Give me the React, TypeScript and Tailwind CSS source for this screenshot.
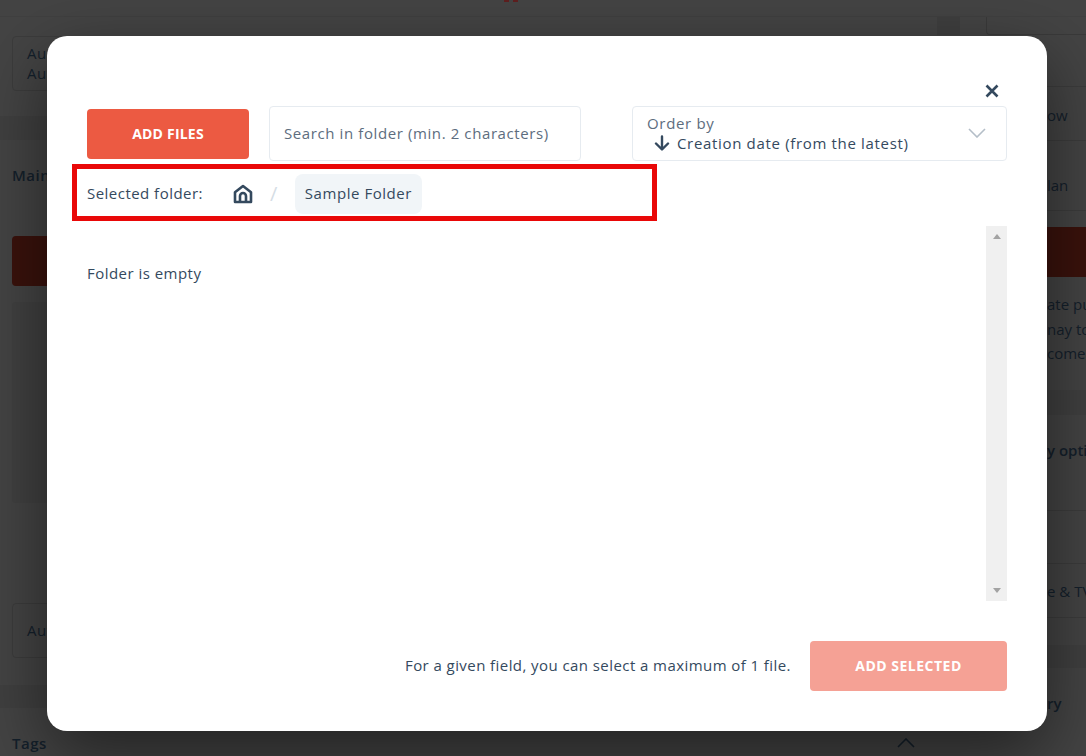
const FONT = "font-['Open_Sans',sans-serif]";

function Home() {
  return (
    <svg width="20" height="20" viewBox="0 0 20 20" fill="none" stroke="#34495e" strokeWidth="2.6" strokeLinejoin="round">
      <path d="M2 8.2 10 2l8 6.2V18H2z" />
      <path d="M7 18v-6a3 3 0 0 1 6 0V18" />
    </svg>
  );
}

function Arrow() {
  return (
    <svg width="16" height="16" viewBox="0 0 16 16" fill="none" stroke="#34495e" strokeWidth="2.4" strokeLinecap="round" strokeLinejoin="round">
      <path d="M8 1.5V14M2 8.5 8 14.5l6-6" />
    </svg>
  );
}

function Background() {
  return (
    <div className="flex h-[756px] w-[1086px] flex-col overflow-hidden bg-[#444] text-[15px] tracking-[0.5px] text-[#14202b]">
      <div className="h-[17px] border-b border-[#404040]">
        <div className="ml-[504px] flex w-[14px] justify-between">
          <div className="h-[2px] w-[5px] bg-[#5e1f1f]" />
          <div className="h-[2px] w-[5px] bg-[#5e1f1f]" />
        </div>
      </div>
      <div className="flex h-[18px]">
        <div className="ml-[937px] w-[23px] bg-[#3f3f3f]" />
        <div className="ml-[26px] flex-1 rounded-bl border-b border-l border-[#3a3a3a]" />
      </div>
      <div className="flex flex-1">
        <div className="flex w-[1047px] shrink-0 flex-col">
          <div className="h-[81px] px-3 pt-[1px]">
            <div className="h-[55px] w-[300px] rounded border border-[#3c3c3c] px-[14px] py-[6px] leading-[20px]">
              <div>Auto</div>
              <div>Auto</div>
            </div>
          </div>
          <div className="h-[24px] bg-[#404040]" />
          <div className="h-[96px] px-3 pt-[24px] font-semibold">Main</div>
          <div className="mx-3 h-[50px] w-[300px] rounded bg-[#3a120c]" />
          <div className="mx-3 mt-[16px] h-[201px] w-[300px] rounded bg-[#414141]" />
          <div className="h-[100px]" />
          <div className="mx-3 h-[55px] w-[300px] rounded border border-[#3c3c3c] px-[14px] py-[16px] leading-[20px]">Auto</div>
          <div className="h-[27px]" />
          <div className="h-[23px] bg-[#404040]" />
          <div className="flex items-center justify-between pt-[24px] pl-3 pr-[132px] font-semibold">
            <span>Tags</span>
            <svg width="18" height="10" viewBox="0 0 18 10" fill="none" stroke="#14202b" strokeWidth="1.6">
              <path d="M1 9 9 1l8 8" />
            </svg>
          </div>
        </div>
        <div className="flex min-w-0 flex-1 flex-col whitespace-nowrap tracking-normal">
          <div className="h-[52px] border-b border-[#3c3c3c]" />
          <div className="h-[54px] border-b border-[#3c3c3c] pt-[17px]">ow</div>
          <div className="h-[16px]" />
          <div className="h-[54px] border-b border-[#3c3c3c] pt-[17px]">lan</div>
          <div className="h-[16px]" />
          <div className="h-[50px] bg-[#3a120c]" />
          <div className="h-[25px] pt-[15px] leading-[24.5px]">
            <div>ate pu</div>
            <div>nay to</div>
            <div>come</div>
          </div>
          <div className="h-[88px]" />
          <div className="h-[25px] bg-[#404040]" />
          <div className="h-[95px] pt-[24px] font-semibold">y optio</div>
          <div className="h-[54px] border-y border-[#3c3c3c]" />
          <div className="h-[54px] border-b border-[#3c3c3c] pt-[16px]">e &amp; TV</div>
          <div className="h-[27px]" />
          <div className="h-[23px] bg-[#404040]" />
          <div className="pt-[24px] font-semibold">ry</div>
        </div>
      </div>
    </div>
  );
}

export default function App() {
  return (
    <div className={`relative h-[756px] w-[1086px] overflow-hidden ${FONT}`}>
      <Background />
      <div className="absolute left-[47px] top-[36px] flex h-[695px] w-[1000px] flex-col rounded-[20px] bg-white px-[40px] text-[#34495e] shadow-[0_24px_70px_rgba(0,0,0,0.5)]">
        <div className="flex h-[70px] items-end justify-end pb-[8px] pr-[8px]">
          <svg width="14" height="14" viewBox="0 0 14 14" fill="none" stroke="#34495e" strokeWidth="2.6">
            <path d="M1.5 1.5l11 11M12.5 1.5l-11 11" />
          </svg>
        </div>
        <div className="flex items-center">
          <button className="h-[50px] w-[162px] rounded bg-[#ec5a42] text-[14px] font-bold tracking-[0.2px] text-white">ADD FILES</button>
          <div className="ml-5 flex h-[55px] w-[312px] items-center rounded border border-[#e6ebf0] px-[14px] text-[15px] tracking-[0.6px] text-[#5d6d7e]">
            Search in folder (min. 2 characters)
          </div>
          <div className="ml-[51px] flex h-[55px] w-[375px] items-center justify-between rounded border border-[#e6ebf0] pb-[2px] pl-[14px] pr-[20px] text-[15px] leading-[20px] tracking-[0.67px]">
            <div>
              <div className="text-[#5d6d7e]">Order by</div>
              <div className="flex items-center gap-[7px] pl-[7px]">
                <Arrow />
                <span>Creation date (from the latest)</span>
              </div>
            </div>
            <svg width="18" height="10" viewBox="0 0 18 10" fill="none" stroke="#b4bec8" strokeWidth="1.6">
              <path d="M1 1l8 8 8-8" />
            </svg>
          </div>
        </div>
        <div className="mt-[3px] flex h-[57px] w-[585px] -translate-x-[15px] items-center border-[5px] border-[#e90808] pl-[10px] pt-[3px] text-[15px] tracking-[0.47px]">
          <span className="mb-[2px] w-[146px]">Selected folder:</span>
          <Home />
          <span className="mx-[17px] text-[20px] text-[#d5dde5]">/</span>
          <span className="rounded-lg bg-[#f1f5f8] px-[10px] pb-[11px] pt-[9px] leading-[20px] tracking-[0.55px]">Sample Folder</span>
        </div>
        <div className="mt-[5px] flex h-[375px]">
          <div className="flex-1 pt-[37px] text-[15px] leading-[20px] tracking-[0.47px]">Folder is empty</div>
          <div className="flex w-[21px] flex-col items-center justify-between bg-[#f0f0f0] py-[8px]">
            <div className="h-0 w-0 border-x-[4.5px] border-b-[5px] border-x-transparent border-b-[#a3a3a3]" />
            <div className="h-0 w-0 border-x-[4.5px] border-t-[5px] border-x-transparent border-t-[#a3a3a3]" />
          </div>
        </div>
        <div className="mt-[40px] flex items-center justify-end">
          <span className="mb-[2px] mr-[19px] text-[15px] tracking-[0.43px]">For a given field, you can select a maximum of 1 file.</span>
          <button className="h-[50px] w-[197px] rounded bg-[#f5a195] pb-[2px] text-[14px] font-bold tracking-[0.5px] text-white">ADD SELECTED</button>
        </div>
      </div>
    </div>
  );
}
